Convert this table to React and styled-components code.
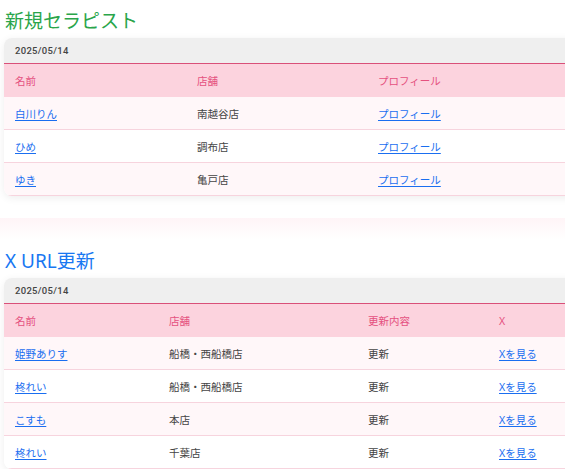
import React from 'react';
import styled, { createGlobalStyle } from 'styled-components';

const GlobalStyle = createGlobalStyle`
  html, body {
    margin: 0;
    padding: 0;
    background: #ffffff;
    overflow-x: hidden;
  }
  body {
    font-family: "Noto Sans", "Noto Sans CJK JP", sans-serif;
    color: #444;
  }
`;

const Page = styled.div`
  padding: 0 0 0 4px;
`;

const Section = styled.section`
  display: flex;
  flex-direction: column;
`;

const Title = styled.h2`
  margin: 8px 0 4px 1px;
  font-size: 19px;
  line-height: 26px;
  font-weight: 400;
  color: ${(p) => p.$color};
  font-family: "Noto Sans", "Noto Sans CJK JP", sans-serif;
`;

const Card = styled.div`
  margin-right: -24px;
  background: #fff;
  border-radius: 8px;
  overflow: hidden;
  box-shadow: 0 2px 8px rgba(0, 0, 0, 0.07);
`;

const DateBar = styled.div`
  height: 25px;
  display: flex;
  align-items: center;
  padding-left: 11px;
  background: #efefef;
  border-bottom: 1px solid #d95079;
  font-family: Roboto, "Noto Sans", sans-serif;
  font-size: 9.5px;
  font-weight: 500;
  letter-spacing: 0.3px;
  color: #444;
`;

const Table = styled.table`
  width: 100%;
  border-collapse: collapse;
  table-layout: fixed;
`;

const Th = styled.th`
  height: 33px;
  padding: 0 0 0 11px;
  text-align: left;
  font-weight: 400;
  font-size: 10.5px;
  color: #e5517f;
  background: #fcd3de;
`;

const Row = styled.tr`
  background: ${(p) => (p.$odd ? '#fff7f9' : '#ffffff')};
  border-bottom: 1px solid #f7d4de;
`;

const Td = styled.td`
  height: 32px;
  padding: 0 0 0 11px;
  font-size: 10.5px;
  color: #444;
  white-space: nowrap;
`;

const Link = styled.a`
  color: #1a6ef0;
  text-decoration: underline;
  text-underline-offset: 2px;
  cursor: pointer;
`;

const Divider = styled.div`
  height: 22px;
  margin-top: 22px;
  margin-left: -4px;
  background: linear-gradient(#fff4f7, #ffffff);
`;

const therapists = [
  { name: '白川りん', shop: '南越谷店' },
  { name: 'ひめ', shop: '調布店' },
  { name: 'ゆき', shop: '亀戸店' },
];

const xUpdates = [
  { name: '姫野ありす', shop: '船橋・西船橋店' },
  { name: '柊れい', shop: '船橋・西船橋店' },
  { name: 'こすも', shop: '本店' },
  { name: '柊れい', shop: '千葉店' },
];

export default function App() {
  return (
    <>
      <GlobalStyle />
      <Page>
        <Section>
          <Title $color="#2aa54a">新規セラピスト</Title>
          <Card>
            <DateBar>2025/05/14</DateBar>
            <Table>
              <colgroup>
                <col style={{ width: 182 }} />
                <col style={{ width: 181 }} />
                <col />
              </colgroup>
              <thead>
                <tr>
                  <Th>名前</Th>
                  <Th>店舗</Th>
                  <Th>プロフィール</Th>
                </tr>
              </thead>
              <tbody>
                {therapists.map((t, i) => (
                  <Row key={i} $odd={i % 2 === 0}>
                    <Td><Link>{t.name}</Link></Td>
                    <Td>{t.shop}</Td>
                    <Td><Link>プロフィール</Link></Td>
                  </Row>
                ))}
              </tbody>
            </Table>
          </Card>
        </Section>

        <Divider />

        <Section>
          <Title $color="#1877f2">X URL更新</Title>
          <Card>
            <DateBar>2025/05/14</DateBar>
            <Table>
              <colgroup>
                <col style={{ width: 154 }} />
                <col style={{ width: 199 }} />
                <col style={{ width: 131 }} />
                <col />
              </colgroup>
              <thead>
                <tr>
                  <Th>名前</Th>
                  <Th>店舗</Th>
                  <Th>更新内容</Th>
                  <Th>X</Th>
                </tr>
              </thead>
              <tbody>
                {xUpdates.map((u, i) => (
                  <Row key={i} $odd={i % 2 === 0}>
                    <Td><Link>{u.name}</Link></Td>
                    <Td>{u.shop}</Td>
                    <Td>更新</Td>
                    <Td><Link>Xを見る</Link></Td>
                  </Row>
                ))}
              </tbody>
            </Table>
          </Card>
        </Section>
      </Page>
    </>
  );
}
